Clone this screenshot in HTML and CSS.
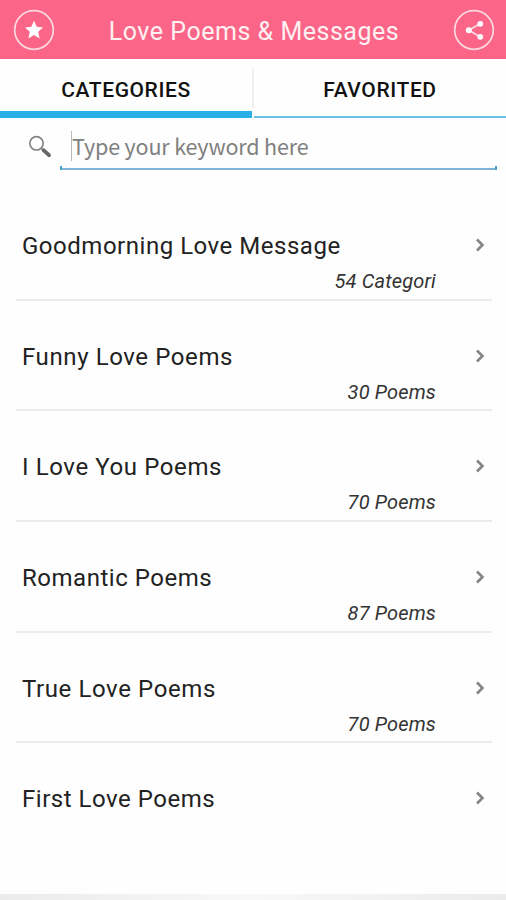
FILE: index.html
```html
<!DOCTYPE html>
<html lang="en">
<head>
<meta charset="utf-8">
<title>Love Poems &amp; Messages</title>
<link rel="stylesheet" href="styles.css">
</head>
<body>
<header class="bar">
  <svg class="round" viewBox="0 0 42 42"><circle cx="21" cy="21" r="19.3"/><path class="solid" d="M21 11.8l2.7 6 6.3.6-4.8 4.4 1.4 6.6-5.6-3.4-5.6 3.4 1.4-6.6-4.8-4.4 6.3-.6z"/></svg>
  <h1>Love Poems &amp; Messages</h1>
  <svg class="round" viewBox="0 0 42 42"><circle cx="21" cy="21" r="19.3"/><path d="M27 14.8L15.8 21.3 27 27.8"/><g class="solid"><circle cx="27.3" cy="14.8" r="2.9"/><circle cx="15.8" cy="21.3" r="3"/><circle cx="27.3" cy="27.8" r="2.9"/></g></svg>
</header>
<nav class="tabs"><div class="tab active"><span>CATEGORIES</span></div><i class="split"></i><div class="tab"><span>FAVORITED</span></div></nav>
<div class="search">
  <svg class="lens" viewBox="0 0 24 24"><circle cx="8.5" cy="8.3" r="6.7"/><path d="M13.2 13l2.8 2.8"/><path class="grip" d="M15.5 15.2l5.5 5"/></svg>
  <div class="field"><i class="caret"></i><span>Type your keyword here</span></div>
</div>
<main class="list">
  <div class="row"><span class="name n1">Goodmorning Love Message</span><svg class="chev" viewBox="0 0 10 14"><path d="M2 1.5L7.5 7 2 12.5"/></svg><span class="count">54 Categori</span></div>
  <div class="row"><span class="name">Funny Love Poems</span><svg class="chev" viewBox="0 0 10 14"><path d="M2 1.5L7.5 7 2 12.5"/></svg><span class="count">30 Poems</span></div>
  <div class="row"><span class="name">I Love You Poems</span><svg class="chev" viewBox="0 0 10 14"><path d="M2 1.5L7.5 7 2 12.5"/></svg><span class="count">70 Poems</span></div>
  <div class="row"><span class="name n1">Romantic Poems</span><svg class="chev" viewBox="0 0 10 14"><path d="M2 1.5L7.5 7 2 12.5"/></svg><span class="count">87 Poems</span></div>
  <div class="row"><span class="name">True Love Poems</span><svg class="chev" viewBox="0 0 10 14"><path d="M2 1.5L7.5 7 2 12.5"/></svg><span class="count">70 Poems</span></div>
  <div class="row last"><span class="name n1">First Love Poems</span><svg class="chev" viewBox="0 0 10 14"><path d="M2 1.5L7.5 7 2 12.5"/></svg></div>
</main>
<footer class="foot"></footer>
</body>
</html>
```
FILE: styles.css
```css
* { box-sizing: border-box; }
body { margin: 0; width: 506px; height: 900px; overflow: hidden; display: flex; flex-direction: column; background: #fefefe; color: #222; font-family: Roboto, sans-serif; }
.bar { height: 59px; flex: none; display: flex; align-items: center; justify-content: space-between; padding: 1px 11px 0 13px; background: #fb6688; color: #fff0f2; }
.bar h1 { margin: 3px 0 0; font-size: 25px; font-weight: 400; letter-spacing: .52px; white-space: nowrap; }
.round { width: 42px; height: 42px; fill: none; stroke: #ffd9e0; stroke-width: 1.7; }
.solid { fill: #fff; stroke: none; }
.tabs { height: 59px; flex: none; display: flex; }
.tab { width: 252px; display: flex; justify-content: center; padding-top: 16px; font-size: 21px; line-height: 30px; font-weight: 500; letter-spacing: .6px; color: #111; border-bottom: 2px solid #6fc0e6; }
.active { border-bottom: 7px solid #29b0e4; }
.split { width: 2px; height: 40px; margin-top: 9px; background: #f0f0f0; }
.search { height: 72px; flex: none; display: flex; padding-left: 28px; }
.lens { width: 24px; height: 24px; margin-top: 17px; fill: none; stroke: #858585; stroke-width: 1.7; }
.grip { stroke: #666; stroke-width: 3.8; stroke-linecap: round; }
.field { position: relative; width: 437px; height: 52px; margin-left: 8px; padding: 13px 0 0 11px; display: flex; border-bottom: 2px solid #7fb4d4; color: #808080; font-family: "Noto Sans CJK SC", sans-serif; font-size: 21.5px; line-height: 29px; letter-spacing: -.15px; white-space: nowrap; }
.field::before, .field::after { content: ""; position: absolute; bottom: -2px; width: 2px; height: 4px; background: #46a0c8; }
.field::before { left: 0; }
.field::after { right: 0; }
.caret { width: 1px; height: 30px; background: #bbb; }
.list { flex: 1; padding: 0 14px 0 16px; }
.row { height: 110.7px; display: grid; grid-template-columns: 1fr 19px; grid-template-rows: 77px 33px; border-bottom: 2px solid #ebebeb; }
.name { align-self: end; padding-left: 6px; font-size: 24px; line-height: 42px; letter-spacing: .6px; white-space: nowrap; }
.n1 { letter-spacing: .52px; }
.chev { align-self: end; width: 10px; height: 14px; margin: 0 0 15px 2px; fill: none; stroke: #858585; stroke-width: 2.6; }
.count { grid-column: 1 / 3; justify-self: end; margin-right: 56px; font-size: 20px; font-style: italic; line-height: 28px; letter-spacing: .15px; color: #333; }
.last { border: 0; }
.foot { height: 6px; flex: none; background: linear-gradient(90deg, #ebebeb, #f8f8f8 50%, #ebebeb); }
```
